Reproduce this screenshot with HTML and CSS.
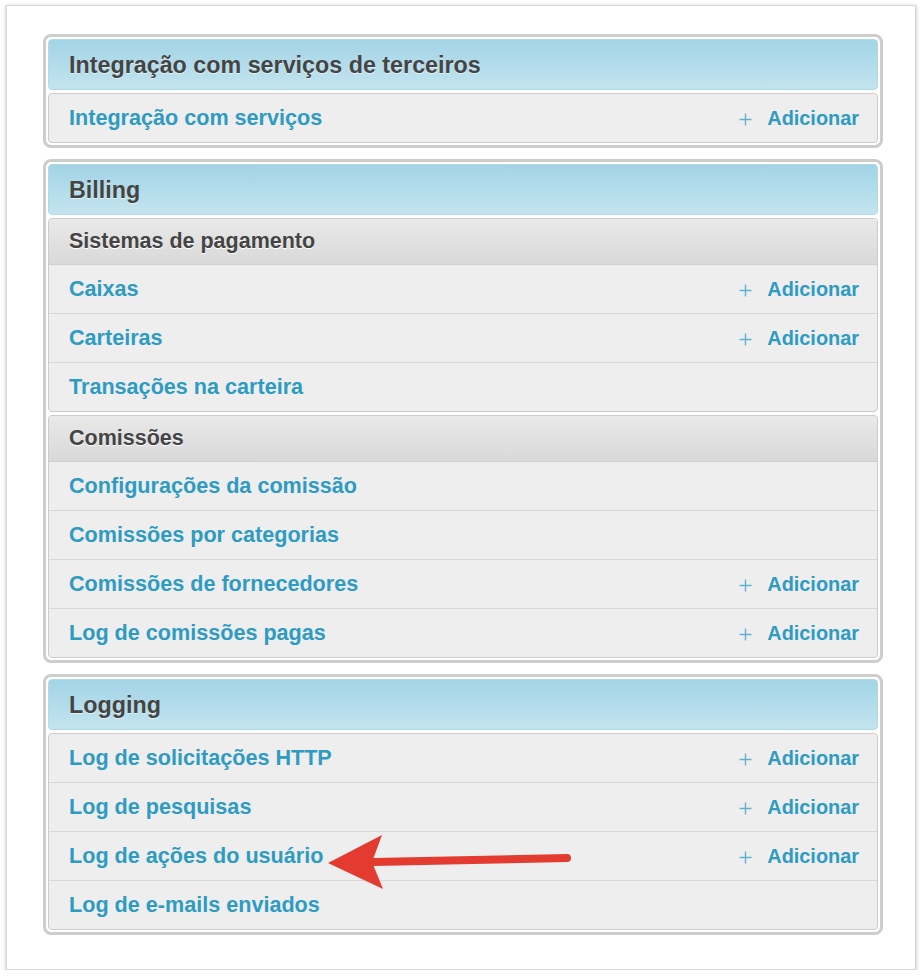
FILE: index.html
```html
<!DOCTYPE html>
<html lang="pt">
<head>
<meta charset="utf-8">
<title>Admin</title>
<link rel="stylesheet" href="styles.css">
</head>
<body>
<div class="card">
  <section class="group">
    <h2 class="caption">Integração com serviços de terceiros</h2>
    <div class="box">
      <div class="row"><a class="link">Integração com serviços</a><a class="add"><svg class="plus" viewBox="0 0 13 13"><path d="M6.5 0.5v12M0.5 6.5h12"/></svg>Adicionar</a></div>
    </div>
  </section>

  <section class="group">
    <h2 class="caption">Billing</h2>
    <div class="box">
      <h3 class="sub">Sistemas de pagamento</h3>
      <div class="row"><a class="link">Caixas</a><a class="add"><svg class="plus" viewBox="0 0 13 13"><path d="M6.5 0.5v12M0.5 6.5h12"/></svg>Adicionar</a></div>
      <div class="row"><a class="link">Carteiras</a><a class="add"><svg class="plus" viewBox="0 0 13 13"><path d="M6.5 0.5v12M0.5 6.5h12"/></svg>Adicionar</a></div>
      <div class="row"><a class="link">Transações na carteira</a></div>
    </div>
    <div class="box">
      <h3 class="sub">Comissões</h3>
      <div class="row"><a class="link">Configurações da comissão</a></div>
      <div class="row"><a class="link">Comissões por categorias</a></div>
      <div class="row"><a class="link">Comissões de fornecedores</a><a class="add"><svg class="plus" viewBox="0 0 13 13"><path d="M6.5 0.5v12M0.5 6.5h12"/></svg>Adicionar</a></div>
      <div class="row"><a class="link">Log de comissões pagas</a><a class="add"><svg class="plus" viewBox="0 0 13 13"><path d="M6.5 0.5v12M0.5 6.5h12"/></svg>Adicionar</a></div>
    </div>
  </section>

  <section class="group">
    <h2 class="caption">Logging</h2>
    <div class="box">
      <div class="row"><a class="link">Log de solicitações HTTP</a><a class="add"><svg class="plus" viewBox="0 0 13 13"><path d="M6.5 0.5v12M0.5 6.5h12"/></svg>Adicionar</a></div>
      <div class="row"><a class="link">Log de pesquisas</a><a class="add"><svg class="plus" viewBox="0 0 13 13"><path d="M6.5 0.5v12M0.5 6.5h12"/></svg>Adicionar</a></div>
      <div class="row"><a class="link">Log de ações do usuário</a><a class="add"><svg class="plus" viewBox="0 0 13 13"><path d="M6.5 0.5v12M0.5 6.5h12"/></svg>Adicionar</a></div>
      <div class="row"><a class="link">Log de e-mails enviados</a></div>
    </div>
  </section>

  <svg class="arrow" viewBox="0 0 260 70" width="260" height="70">
    <path d="M48 37 L241 33" stroke="#e43b30" stroke-width="8" stroke-linecap="round" fill="none"/>
    <polygon points="2,38 56,10 46,37 57,64" fill="#e43b30"/>
  </svg>
</div>
</body>
</html>
```
FILE: styles.css
```css
* { box-sizing: border-box; }

html, body {
  margin: 0;
  padding: 0;
  background: #ffffff;
}

body {
  font-family: "Liberation Sans", Arial, Helvetica, sans-serif;
}

.card {
  position: relative;
  margin: 5px 0 0 6px;
  width: 910px;
  height: 965px;
  background: #fff;
  border: 1px solid #d6d6d6;
  box-shadow: 0 1px 4px rgba(0, 0, 0, 0.25);
  padding: 28px 32px 0 36px;
}

.group {
  border: 3px solid #cdcdcd;
  border-radius: 8px;
  padding: 2px;
  background: #fff;
  margin-bottom: 11px;
}

.caption {
  margin: 0;
  height: 51px;
  display: flex;
  align-items: center;
  padding: 2px 20px 0;
  font-size: 23.3px;
  font-weight: bold;
  color: #444;
  text-shadow: 0 1px 0 rgba(255, 255, 255, 0.6);
  background: linear-gradient(#a3d4e6, #c3e4ef);
  border: 1px solid #b2d9e7;
  border-radius: 4px;
}

.box {
  margin-top: 3px;
  border: 1px solid #cccccc;
  border-radius: 4px;
  background: #eeeeee;
  overflow: hidden;
}

.sub {
  margin: 0;
  height: 46px;
  display: flex;
  align-items: center;
  padding: 0 20px;
  font-size: 21.5px;
  font-weight: bold;
  color: #444;
  text-shadow: 0 1px 0 #fff;
  background: linear-gradient(#e9e9e9, #d9d9d9);
  border-bottom: 1px solid #cfcfcf;
}

.row {
  height: 49px;
  display: flex;
  align-items: center;
  justify-content: space-between;
  padding: 0 18px 0 20px;
  border-top: 1px solid #d8d8d8;
}

.box > .row:first-child {
  border-top: none;
  height: 48px;
}

.sub + .row { border-top: none; height: 48px; }

.link {
  font-size: 21.6px;
  font-weight: bold;
  color: #2e9bc3;
  text-decoration: none;
}

.add {
  display: flex;
  align-items: center;
  font-size: 19.9px;
  font-weight: bold;
  color: #2e9bc3;
}

.plus {
  width: 13px;
  height: 13px;
  margin-right: 15px;
  margin-top: 2px;
}

.plus path {
  stroke: #5fb3d1;
  stroke-width: 1.4;
  fill: none;
}

.arrow {
  position: absolute;
  left: 319px;
  top: 819px;
}
```
